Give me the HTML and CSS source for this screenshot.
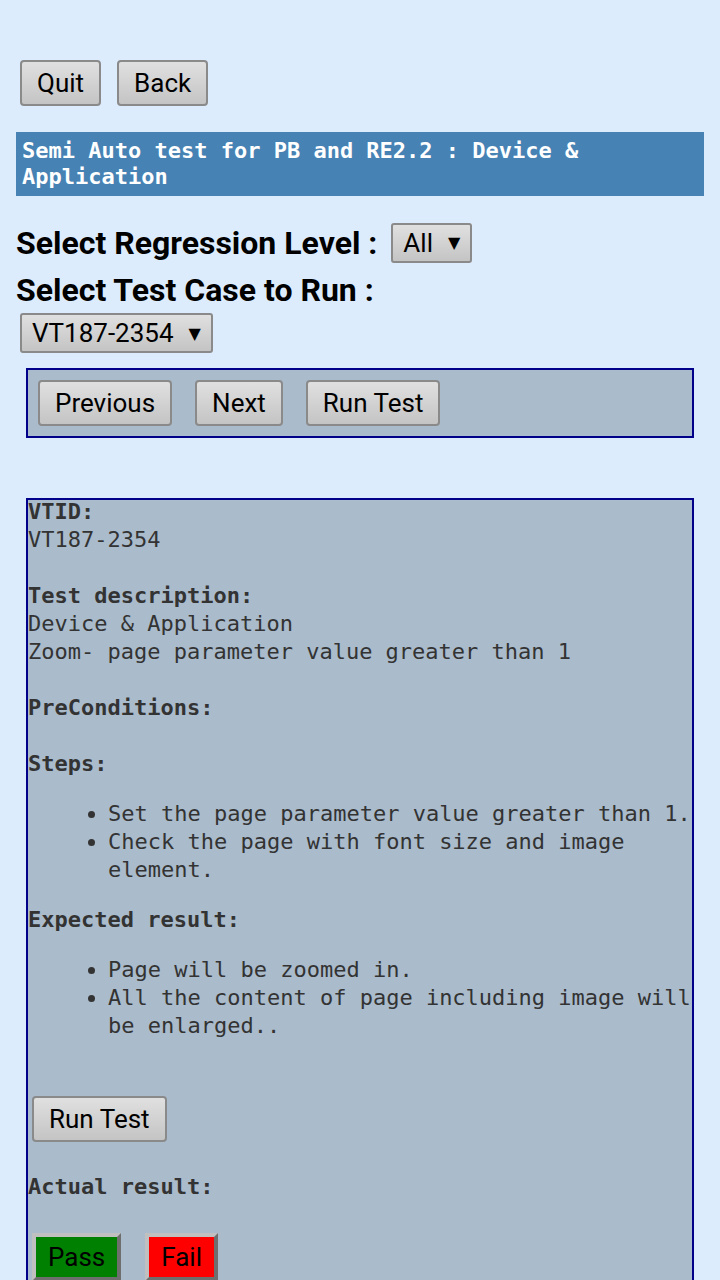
FILE: index.html
```html
<!DOCTYPE html>
<html>
<head>
<meta charset="utf-8">
<link rel="stylesheet" href="styles.css">
</head>
<body>
<div class="top-row">
  <button class="btn">Quit</button>
  <button class="btn">Back</button>
</div>
<div class="title">Semi Auto test for PB and RE2.2 : Device &amp; Application</div>
<div class="row">
  <span class="label">Select Regression Level :</span>
  <span class="dropdown"><span>All</span><span class="caret">▼</span></span>
</div>
<div class="row">
  <span class="label">Select Test Case to Run :</span>
</div>
<div class="row2">
  <span class="dropdown"><span>VT187-2354</span><span class="caret">▼</span></span>
</div>
<div class="nav">
  <button class="btn">Previous</button>
  <button class="btn">Next</button>
  <button class="btn">Run Test</button>
</div>
<div class="content">
  <div class="b">VTID:</div>
  <div>VT187-2354</div>
  <div class="blank"></div>
  <div class="b">Test description:</div>
  <div>Device &amp; Application</div>
  <div>Zoom- page parameter value greater than 1</div>
  <div class="blank"></div>
  <div class="b">PreConditions:</div>
  <div class="blank"></div>
  <div class="b">Steps:</div>
  <ul>
    <li>Set the page parameter value greater than 1.</li>
    <li>Check the page with font size and image element.</li>
  </ul>
  <div class="b">Expected result:</div>
  <ul>
    <li>Page will be zoomed in.</li>
    <li>All the content of page including image will be enlarged..</li>
  </ul>
  <div class="run-row"><button class="btn">Run Test</button></div>
  <div class="b actual">Actual result:</div>
  <div class="result-row">
    <button class="res pass">Pass</button>
    <button class="res fail">Fail</button>
  </div>
</div>
</body>
</html>
```
FILE: styles.css
```css
html, body {
  margin: 0;
  padding: 0;
}
body {
  background: #dcecfd;
  padding: 60px 16px 0;
  font-family: Roboto, "Liberation Sans", sans-serif;
  overflow: hidden;
  height: 1280px;
  box-sizing: border-box;
}
.btn {
  font-family: Roboto, "Liberation Sans", sans-serif;
  font-size: 26px;
  color: #000;
  height: 46px;
  padding: 0 15px;
  border: 2px solid #8a8a8a;
  border-radius: 4px;
  background: linear-gradient(#e0e0e0, #c4c4c4);
  margin: 0;
  line-height: 42px;
}
.top-row {
  display: flex;
  gap: 16px;
  padding-left: 4px;
}
.title {
  margin-top: 26px;
  background: #4682b4;
  color: #fff;
  font-family: "DejaVu Sans Mono", "Liberation Mono", monospace;
  font-weight: bold;
  font-size: 22px;
  line-height: 26px;
  padding: 6px 6px;
}
.row {
  display: flex;
  align-items: center;
  gap: 14px;
  height: 47px;
}
.title + .row {
  margin-top: 23px;
}
.label {
  font-weight: bold;
  font-size: 32px;
  color: #000;
}
.row2 {
  padding-left: 4px;
}
.dropdown {
  display: inline-flex;
  align-items: center;
  gap: 15px;
  height: 40px;
  box-sizing: border-box;
  padding: 0 10px;
  border: 2px solid #8a8a8a;
  border-radius: 3px;
  background: linear-gradient(#e0e0e0, #c4c4c4);
  font-size: 26px;
  color: #000;
}
.caret {
  font-size: 16px;
  font-family: "DejaVu Sans", sans-serif;
}
.nav {
  margin: 15px 10px 0;
  border: 2px solid #00008b;
  background: #aabbcc;
  padding: 10px;
  display: flex;
  gap: 23px;
}
.content {
  margin: 60px 10px 0;
  border: 2px solid #00008b;
  border-bottom: none;
  background: #aabbcc;
  font-family: "DejaVu Sans Mono", "Liberation Mono", monospace;
  font-size: 22px;
  line-height: 28px;
  color: #333;
  height: 900px;
}
.content > :first-child {
  margin-top: -2px;
}
.b { font-weight: bold; }
.blank { height: 28px; }
ul {
  margin: 22px 0;
  padding-left: 80px;
}
.run-row {
  padding: 34px 4px 0;
}
.actual {
  margin-top: 31px;
}
.result-row {
  margin-top: 32px;
  padding-left: 4px;
  display: flex;
  gap: 24px;
}
.res {
  font-family: Roboto, "Liberation Sans", sans-serif;
  font-size: 26px;
  color: #000;
  height: 48px;
  padding: 0 12px;
  margin: 0;
  border: 4px solid;
  border-color: #c0c0c0 #6e6e6e #6e6e6e #c0c0c0;
  border-radius: 0;
}
.pass { background: #008000; }
.fail { background: #ff0000; }
```
